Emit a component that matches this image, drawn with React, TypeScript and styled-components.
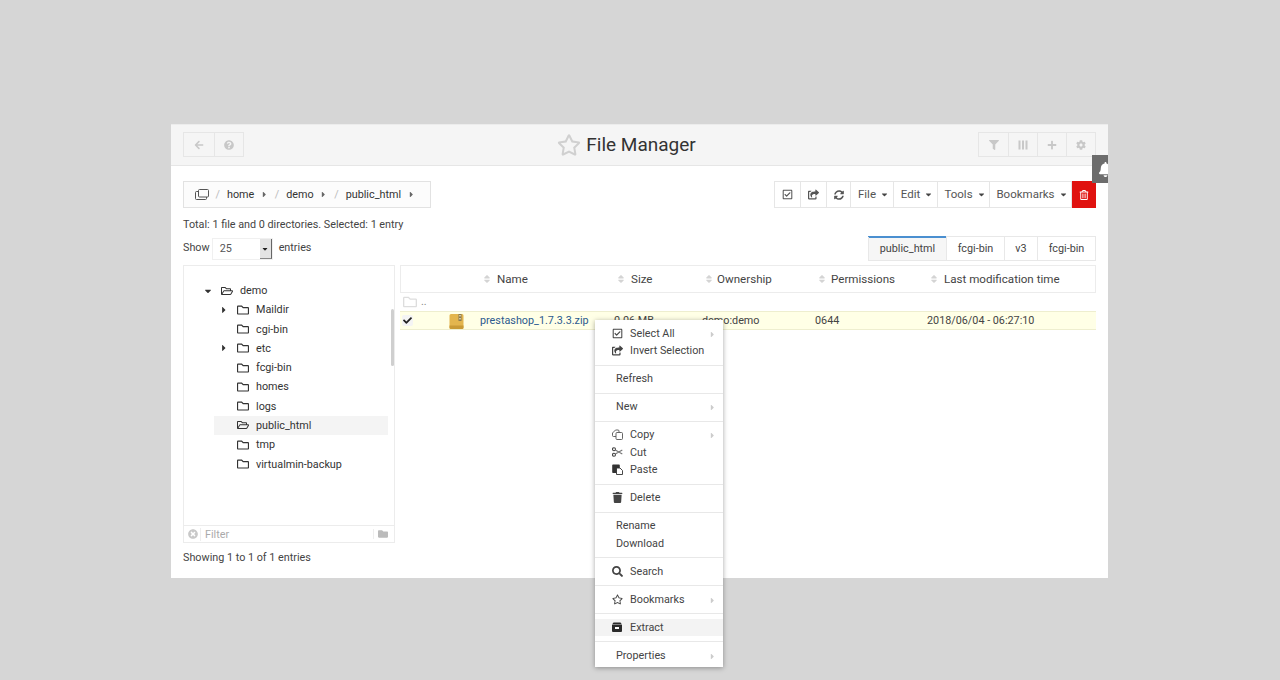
import { ReactNode } from 'react';
import styled, { createGlobalStyle } from 'styled-components';
import {
  FaArrowLeft,
  FaBell,
  FaCaretDown,
  FaCaretRight,
  FaCheck,
  FaCog,
  FaFilter,
  FaFolder,
  FaPlus,
  FaQuestionCircle,
  FaRegCheckSquare,
  FaRegFolder,
  FaRegFolderOpen,
  FaRegStar,
  FaRegTrashAlt,
  FaSearch,
  FaShareSquare,
  FaSort,
  FaSyncAlt,
  FaTimesCircle,
  FaTrash,
} from 'react-icons/fa';

const GlobalStyle = createGlobalStyle`
  html, body {
    margin: 0;
    padding: 0;
    background: #d6d6d6;
  }
  body {
    font-family: Roboto, "Liberation Sans", sans-serif;
    font-size: 10.8px;
    color: #333;
  }
`;

const Page = styled.div`
  width: 1280px;
  height: 680px;
  padding: 124px 0 0 171px;
  box-sizing: border-box;
  overflow: hidden;
`;

const Panel = styled.div`
  position: relative;
  width: 937px;
  height: 454px;
  background: #fff;
`;

const Header = styled.div`
  height: 42px;
  box-sizing: border-box;
  padding: 7px 12px 0;
  display: flex;
  justify-content: space-between;
  background: #f5f5f5;
  border-top: 1px solid #ececec;
  border-bottom: 1px solid #e6e6e6;
`;

const HeaderGroup = styled.div`
  display: flex;
  height: 25px;
  border: 1px solid #e6e6e6;
  box-sizing: border-box;
`;

const HeaderButton = styled.div<{ $w: number }>`
  width: ${(p) => p.$w}px;
  box-sizing: border-box;
  display: flex;
  align-items: center;
  justify-content: center;
  color: #c8c8c8;
  font-size: 10px;
  & + & {
    border-left: 1px solid #e6e6e6;
  }
`;

const Title = styled.div`
  display: flex;
  align-items: center;
  gap: 5px;
  height: 25px;
  margin-left: 31px;
  font-size: 19px;
  color: #333;
  svg {
    color: #d0d0d0;
    font-size: 24px;
  }
`;

const Content = styled.div`
  padding: 15px 12px 0;
`;

const TopRow = styled.div`
  display: flex;
  justify-content: space-between;
  height: 27px;
`;

const Breadcrumb = styled.div`
  display: flex;
  align-items: center;
  width: 248px;
  box-sizing: border-box;
  padding: 0 0 1px 11px;
  border: 1px solid #e2e2e2;
  background: #fcfcfc;
  color: #333;
`;

const CrumbIcon = styled.svg`
  flex-shrink: 0;
  width: 14px;
  height: 13px;
  margin-right: 6.5px;
`;

const Slash = styled.span`
  color: #bbb;
  margin-right: 7px;
`;

const CrumbName = styled.span`
  margin-right: 5.5px;
`;

const CrumbCaret = styled(FaCaretRight)`
  flex-shrink: 0;
  color: #666;
  font-size: 9px;
  margin-right: 6px;
`;

const Toolbar = styled.div`
  display: flex;
  border: 1px solid #e6e6e6;
  border-right: none;
  box-sizing: border-box;
  background: #fff;
`;

const ToolButton = styled.div<{ $w: number; $label?: boolean }>`
  width: ${(p) => p.$w}px;
  display: flex;
  align-items: center;
  justify-content: center;
  gap: 4px;
  padding: ${(p) => (p.$label ? '0 0 1px 3px' : '0')};
  font-size: 11.5px;
  color: #555;
  border-right: 1px solid #e6e6e6;
  box-sizing: border-box;
`;

const DangerButton = styled.div`
  width: 24px;
  margin: -1px 0;
  display: flex;
  align-items: center;
  justify-content: center;
  background: #e0120f;
  color: #fff;
  font-size: 10px;
`;

const DropCaret = styled(FaCaretDown)`
  font-size: 9px;
  color: #444;
`;

const StatusLine = styled.div`
  margin-top: 10px;
  height: 14px;
  line-height: 14px;
  color: #444;
`;

const ShowRow = styled.div`
  margin-top: 4px;
  height: 25px;
  display: flex;
  align-items: flex-start;
  justify-content: space-between;
`;

const ShowLabel = styled.div`
  display: flex;
  align-items: flex-start;
  height: 22px;
  margin-top: 2px;
  gap: 2px;
  line-height: 20px;
  color: #444;
`;

const SelectBox = styled.div`
  width: 61px;
  height: 22px;
  display: flex;
  justify-content: space-between;
  align-items: stretch;
  margin-right: 4px;
  border: 1px solid #f0f0f0;
  box-sizing: border-box;
  padding-left: 7px;
  line-height: 19px;
  color: #555;
`;

const SelectArrow = styled.div`
  width: 11px;
  display: flex;
  align-items: center;
  justify-content: center;
  background: #e4e4e4;
  border-right: 1px solid #666;
  border-bottom: 1px solid #888;
  font-size: 8px;
  color: #222;
`;

const Tabs = styled.div`
  display: flex;
  height: 25px;
  border: 1px solid #e8e8e8;
  border-left: none;
  box-sizing: border-box;
`;

const Tab = styled.div<{ $w: number; $active?: boolean }>`
  width: ${(p) => p.$w}px;
  display: flex;
  align-items: center;
  justify-content: center;
  box-sizing: border-box;
  color: #444;
  border-left: 1px solid #e8e8e8;
  background: ${(p) => (p.$active ? '#f6f6f6' : '#fff')};
  ${(p) => (p.$active ? 'box-shadow: 0 -1px 0 #4a8fd0, inset 0 1px 0 #4a8fd0;' : '')}
`;

const Main = styled.div`
  display: flex;
  gap: 5px;
  height: 278px;
  margin-top: 4px;
`;

const TreePanel = styled.div`
  position: relative;
  width: 212px;
  box-sizing: border-box;
  display: flex;
  flex-direction: column;
  border: 1px solid #ececec;
`;

const TreeBody = styled.div`
  flex: 1;
  padding-top: 15px;
`;

const TreeRow = styled.div<{ $level: number; $active?: boolean }>`
  display: flex;
  align-items: center;
  height: 19.28px;
  margin-left: ${(p) => (p.$level === 0 ? 0 : 30)}px;
  margin-right: 6px;
  padding-left: ${(p) => (p.$level === 0 ? 37 : 23)}px;
  background: ${(p) => (p.$active ? '#f4f4f4' : 'transparent')};
  color: #333;
`;

const TreeToggle = styled.span`
  position: relative;
  width: 0;
  color: #333;
  font-size: 10px;
  display: flex;
  left: -18px;
  svg {
    flex-shrink: 0;
  }
`;

const TreeFolder = styled.span`
  display: flex;
  width: 19px;
  font-size: 12px;
  color: #333;
`;

const Scrollbar = styled.div`
  position: absolute;
  top: 43px;
  right: 0;
  width: 3px;
  height: 57px;
  background: #cfcfcf;
  border-radius: 2px;
`;

const FilterBar = styled.div`
  height: 16px;
  display: flex;
  align-items: center;
  padding: 0 6px 0 4px;
  border-top: 1px solid #ececec;
  color: #aaa;
`;

const FilterClear = styled(FaTimesCircle)`
  color: #c8c8c8;
  font-size: 10px;
  margin-right: 2px;
`;

const FilterText = styled.span`
  flex: 1;
  padding-left: 4px;
  border-left: 1px solid #eee;
`;

const FilterFolder = styled.span`
  display: flex;
  padding-left: 4px;
  border-left: 1px solid #eee;
  color: #bbb;
  font-size: 10px;
`;

const Table = styled.div`
  flex: 1;
  display: flex;
  flex-direction: column;
`;

const columns = '40px 40px 134px 88px 113px 112px 1fr';

const HeadRow = styled.div`
  display: grid;
  grid-template-columns: ${columns};
  height: 28px;
  box-sizing: border-box;
  border: 1px solid #ececec;
`;

const HeadCell = styled.div<{ $gap: number }>`
  display: flex;
  align-items: center;
  gap: ${(p) => p.$gap}px;
  padding-left: 1px;
  font-size: 11.6px;
  color: #444;
  svg {
    color: #d4d4d4;
    font-size: 10px;
  }
`;

const ParentRow = styled.div`
  height: 18px;
  display: flex;
  align-items: center;
  gap: 4px;
  padding-left: 3px;
  color: #888;
  line-height: 1;
`;

const FileRow = styled.div`
  display: grid;
  grid-template-columns: ${columns};
  align-items: center;
  height: 19px;
  box-sizing: border-box;
  background: #ffffe6;
  border-top: 1px solid #eeeecf;
  border-bottom: 1px solid #eeeecf;
  color: #444;
`;

const CheckCell = styled.div`
  display: flex;
  padding-left: 2px;
  font-size: 9px;
  color: #222;
`;

const CheckBox = styled.span`
  width: 11px;
  height: 11px;
  display: flex;
  align-items: center;
  justify-content: center;
  background: #f4f4f4;
  border-radius: 2px;
`;

const ZipCell = styled.div`
  display: flex;
  padding-left: 9px;
`;

const FileName = styled.div`
  color: #2c5a8e;
`;

const Footer = styled.div`
  margin-top: 8px;
  line-height: 14px;
  color: #444;
`;

const Bell = styled.div`
  position: absolute;
  top: 31px;
  right: 0;
  width: 16px;
  height: 28px;
  overflow: hidden;
  background: #6c6c6c;
  color: #fff;
  font-size: 15px;
  display: flex;
  align-items: center;
  padding-left: 6px;
  box-sizing: border-box;
  svg {
    flex-shrink: 0;
  }
`;

const Menu = styled.div`
  position: absolute;
  top: 196px;
  left: 424px;
  width: 128px;
  box-sizing: border-box;
  padding: 4.5px 0 2.5px;
  background: #fff;
  box-shadow: 0 1px 5px rgba(0, 0, 0, 0.35);
  color: #444;
`;

const MenuItem = styled.div<{ $active?: boolean }>`
  position: relative;
  display: flex;
  align-items: center;
  height: 17.5px;
  padding-left: 21px;
  background: ${(p) => (p.$active ? '#f3f3f3' : 'transparent')};
`;

const MenuIcon = styled.span`
  display: flex;
  margin-left: -4px;
  width: 18px;
  font-size: 11px;
  color: #444;
`;

const MenuArrow = styled(FaCaretRight)`
  position: absolute;
  right: 6px;
  top: 5px;
  color: #ccc;
  font-size: 9px;
`;

const MenuSep = styled.div`
  height: 1px;
  margin: 5px 0 4.5px;
  background: #e8e8e8;
`;

const treeItems = [
  { name: 'Maildir', toggle: true },
  { name: 'cgi-bin' },
  { name: 'etc', toggle: true },
  { name: 'fcgi-bin' },
  { name: 'homes' },
  { name: 'logs' },
  { name: 'public_html', active: true },
  { name: 'tmp' },
  { name: 'virtualmin-backup' },
];

function ZipIcon() {
  return (
    <svg width="15" height="16" viewBox="0 0 15 16">
      <path d="M2 1h11a1.500 1.500 0 0 1 1.500 1.500v12A1.500 1.500 0 0 1 13 16H2A1.500 1.500 0 0 1 .5 14.500v-12A1.500 1.500 0 0 1 2 1z" fill="#e3b54e" />
      <path d="M.5 12.500h14V14.500A1.500 1.500 0 0 1 13 16H2A1.500 1.500 0 0 1 .5 14.500z" fill="#c99a36" />
      <rect x="9.500" y="1" width="3" height="7" fill="#8a7a50" />
      <rect x="10.300" y="2" width="1.400" height="1.400" fill="#f1e6c0" />
      <rect x="10.300" y="5" width="1.400" height="1.400" fill="#f1e6c0" />
    </svg>
  );
}

function ColumnsIcon() {
  return (
    <svg width="10" height="10" viewBox="0 0 10 10" fill="currentColor">
      <rect x="0.500" y="0.500" width="2" height="9" />
      <rect x="4" y="0.500" width="2" height="9" />
      <rect x="7.500" y="0.500" width="2" height="9" />
    </svg>
  );
}

function CopyIcon() {
  return (
    <svg width="11" height="11" viewBox="0 0 11 11" fill="none" stroke="#555" strokeWidth="0.9">
      <path d="M4 7.500H1.500a1 1 0 0 1-1-1V4L3.500 1H6a1 1 0 0 1 1 1v1.500" />
      <path d="M5 3.500h4.500a1 1 0 0 1 1 1v5a1 1 0 0 1-1 1H5a1 1 0 0 1-1-1v-5a1 1 0 0 1 1-1z" fill="#fff" />
    </svg>
  );
}

function CutIcon() {
  return (
    <svg width="11" height="10" viewBox="0 0 11 10" fill="none" stroke="#444" strokeWidth="1.100">
      <circle cx="2" cy="2.200" r="1.500" />
      <circle cx="2" cy="7.800" r="1.500" />
      <path d="M3.300 3l7 4M3.300 7l7-4" stroke="#777" />
    </svg>
  );
}

function PasteIcon() {
  return (
    <svg width="11" height="11" viewBox="0 0 11 11">
      <path d="M1 .5h6a.8.8 0 0 1 .8.8V9H1a.8.8 0 0 1-.8-.8V1.300A.8.8 0 0 1 1 .5z" fill="#333" />
      <path d="M4.500 4h3.500l2.500 2.500v4h-6z" fill="#fff" stroke="#333" strokeWidth="0.9" />
    </svg>
  );
}

function ExtractIcon() {
  return (
    <svg width="10" height="10" viewBox="0 0 10 10">
      <path d="M1.500.5h7L10 2.500v6.500a1 1 0 0 1-1 1H1a1 1 0 0 1-1-1V2.500z" fill="#2b2b2b" />
      <rect x="0" y="2.300" width="10" height="0.700" fill="#fff" opacity="0.6" />
      <rect x="3" y="5" width="4" height="2" fill="#fff" />
    </svg>
  );
}

function Item({ icon, label, arrow, active }: { icon?: ReactNode; label: string; arrow?: boolean; active?: boolean }) {
  return (
    <MenuItem $active={active}>
      {icon && <MenuIcon>{icon}</MenuIcon>}
      {label}
      {arrow && <MenuArrow />}
    </MenuItem>
  );
}

export default function App() {
  return (
    <Page>
      <GlobalStyle />
      <Panel>
        <Header>
          <HeaderGroup>
            <HeaderButton $w={29.5}><FaArrowLeft /></HeaderButton>
            <HeaderButton $w={29.5}><FaQuestionCircle /></HeaderButton>
          </HeaderGroup>
          <Title><FaRegStar />File Manager</Title>
          <HeaderGroup>
            <HeaderButton $w={29}><FaFilter /></HeaderButton>
            <HeaderButton $w={29}><ColumnsIcon /></HeaderButton>
            <HeaderButton $w={29}><FaPlus /></HeaderButton>
            <HeaderButton $w={29}><FaCog /></HeaderButton>
          </HeaderGroup>
        </Header>
        <Bell><FaBell /></Bell>
        <Content>
          <TopRow>
            <Breadcrumb>
              <CrumbIcon viewBox="0 0 14 13" fill="none" stroke="#555" strokeWidth="1">
                <rect x="3.500" y="1.500" width="10" height="7.500" rx="1" />
                <path d="M3.500 3.500H1.500a1 1 0 0 0-1 1v6a1 1 0 0 0 1 1h9a1 1 0 0 0 1-1V9" />
              </CrumbIcon>
              <Slash>/</Slash>
              <CrumbName>home</CrumbName>
              <CrumbCaret />
              <Slash>/</Slash>
              <CrumbName>demo</CrumbName>
              <CrumbCaret />
              <Slash>/</Slash>
              <CrumbName>public_html</CrumbName>
              <CrumbCaret />
            </Breadcrumb>
            <Toolbar>
              <ToolButton $w={26}><FaRegCheckSquare size={11} /></ToolButton>
              <ToolButton $w={26}><FaShareSquare size={11} /></ToolButton>
              <ToolButton $w={24}><FaSyncAlt size={10} /></ToolButton>
              <ToolButton $w={43} $label>File <DropCaret /></ToolButton>
              <ToolButton $w={44} $label>Edit <DropCaret /></ToolButton>
              <ToolButton $w={52} $label>Tools <DropCaret /></ToolButton>
              <ToolButton $w={82} $label>Bookmarks <DropCaret /></ToolButton>
              <DangerButton><FaRegTrashAlt /></DangerButton>
            </Toolbar>
          </TopRow>
          <StatusLine>Total: 1 file and 0 directories. Selected: 1 entry</StatusLine>
          <ShowRow>
            <ShowLabel>
              Show
              <SelectBox>
                25
                <SelectArrow><FaCaretDown /></SelectArrow>
              </SelectBox>
              entries
            </ShowLabel>
            <Tabs>
              <Tab $w={78} $active>public_html</Tab>
              <Tab $w={58}>fcgi-bin</Tab>
              <Tab $w={33}>v3</Tab>
              <Tab $w={58}>fcgi-bin</Tab>
            </Tabs>
          </ShowRow>
          <Main>
            <TreePanel>
              <TreeBody>
                <TreeRow $level={0}>
                  <TreeToggle><FaCaretDown /></TreeToggle>
                  <TreeFolder><FaRegFolderOpen /></TreeFolder>
                  demo
                </TreeRow>
                {treeItems.map((t) => (
                  <TreeRow key={t.name} $level={1} $active={t.active}>
                    {t.toggle && <TreeToggle><FaCaretRight /></TreeToggle>}
                    <TreeFolder>{t.active ? <FaRegFolderOpen /> : <FaRegFolder />}</TreeFolder>
                    {t.name}
                  </TreeRow>
                ))}
              </TreeBody>
              <Scrollbar />
              <FilterBar>
                <FilterClear />
                <FilterText>Filter</FilterText>
                <FilterFolder><FaFolder /></FilterFolder>
              </FilterBar>
            </TreePanel>
            <Table>
              <HeadRow>
                <div />
                <div />
                <HeadCell $gap={5}><FaSort />Name</HeadCell>
                <HeadCell $gap={5}><FaSort />Size</HeadCell>
                <HeadCell $gap={3}><FaSort />Ownership</HeadCell>
                <HeadCell $gap={4}><FaSort />Permissions</HeadCell>
                <HeadCell $gap={5}><FaSort />Last modification time</HeadCell>
              </HeadRow>
              <ParentRow>
                <FaRegFolder color="#ddd" size={14} />..
              </ParentRow>
              <FileRow>
                <CheckCell><CheckBox><FaCheck /></CheckBox></CheckCell>
                <ZipCell><ZipIcon /></ZipCell>
                <FileName>prestashop_1.7.3.3.zip</FileName>
                <div>0.06 MB</div>
                <div>demo:demo</div>
                <div>0644</div>
                <div>2018/06/04 - 06:27:10</div>
              </FileRow>
            </Table>
          </Main>
          <Footer>Showing 1 to 1 of 1 entries</Footer>
        </Content>
        <Menu>
          <Item icon={<FaRegCheckSquare />} label="Select All" arrow />
          <Item icon={<FaShareSquare />} label="Invert Selection" />
          <MenuSep />
          <Item label="Refresh" />
          <MenuSep />
          <Item label="New" arrow />
          <MenuSep />
          <Item icon={<CopyIcon />} label="Copy" arrow />
          <Item icon={<CutIcon />} label="Cut" />
          <Item icon={<PasteIcon />} label="Paste" />
          <MenuSep />
          <Item icon={<FaTrash />} label="Delete" />
          <MenuSep />
          <Item label="Rename" />
          <Item label="Download" />
          <MenuSep />
          <Item icon={<FaSearch />} label="Search" />
          <MenuSep />
          <Item icon={<FaRegStar />} label="Bookmarks" arrow />
          <MenuSep />
          <Item icon={<ExtractIcon />} label="Extract" active />
          <MenuSep />
          <Item label="Properties" arrow />
        </Menu>
      </Panel>
    </Page>
  );
}
